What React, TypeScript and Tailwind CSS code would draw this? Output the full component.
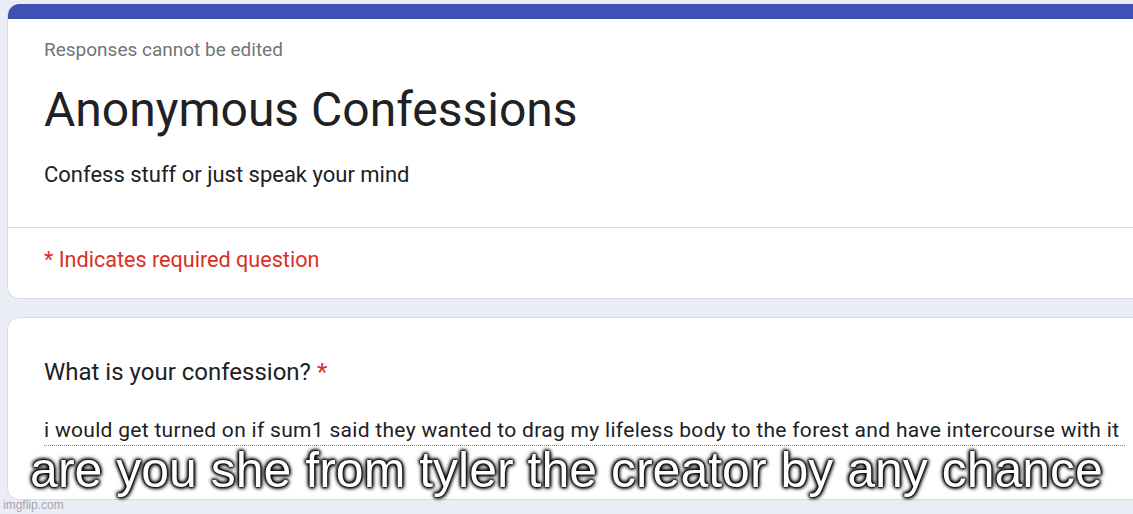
export default function App() {
  return (
    <div className="relative h-[514px] w-[1133px] overflow-hidden bg-[#eaedf6] pl-[7px] pt-[4px] font-['Roboto',sans-serif] text-[#202124]">
      {/* header card */}
      <div className="w-[1150px] overflow-hidden rounded-[12px] border border-t-0 border-[#dadce0] bg-white">
        <div className="h-[15px] bg-[#3f51b5]" />
        <div className="border-b border-[#dadce0] px-[36px] pb-[37px] pt-[19px]">
          <div className="text-[19px] leading-[24px] text-[#70757a]">Responses cannot be edited</div>
          <h1 className="mt-[20px] text-[48px] leading-[56px]">Anonymous Confessions</h1>
          <p className="mt-[22px] text-[22px] leading-[30px]">Confess stuff or just speak your mind</p>
        </div>
        <div className="px-[36px] pb-[23px] pt-[17px] text-[21.6px] leading-[30px] text-[#d93025]">
          * Indicates required question
        </div>
      </div>

      {/* question card */}
      <div className="mt-[18px] h-[183px] w-[1150px] rounded-[12px] border border-[#dadce0] bg-white px-[36px] pt-[38px]">
        <div className="text-[24px] leading-[32px]">
          What is your confession? <span className="text-[#d93025]">*</span>
        </div>
        <div className="mt-[28px] w-[1081px] whitespace-nowrap border-b border-dotted border-[#80868b] text-[21px] leading-[29px] tracking-[0.3px]">
          i would get turned on if sum1 said they wanted to drag my lifeless body to the forest and have intercourse with it
        </div>
      </div>

      {/* meme caption */}
      <div className="absolute left-0 right-0 top-[445px] whitespace-nowrap text-center font-['Liberation_Sans',Arial,sans-serif] text-[50px] leading-[50px] text-white [text-shadow:0_0_1px_#000,0_0_2px_#000,0_0_3px_#000,0_0_4px_#000,1px_1px_4px_#000,-1px_-1px_4px_#000]">
        are you she from tyler the creator by any chance
      </div>

      <div className="absolute bottom-[2px] left-[3px] font-['Liberation_Sans',Arial,sans-serif] text-[12px] leading-[14px] text-[#a3a6ad]">
        imgflip.com
      </div>
    </div>
  );
}
